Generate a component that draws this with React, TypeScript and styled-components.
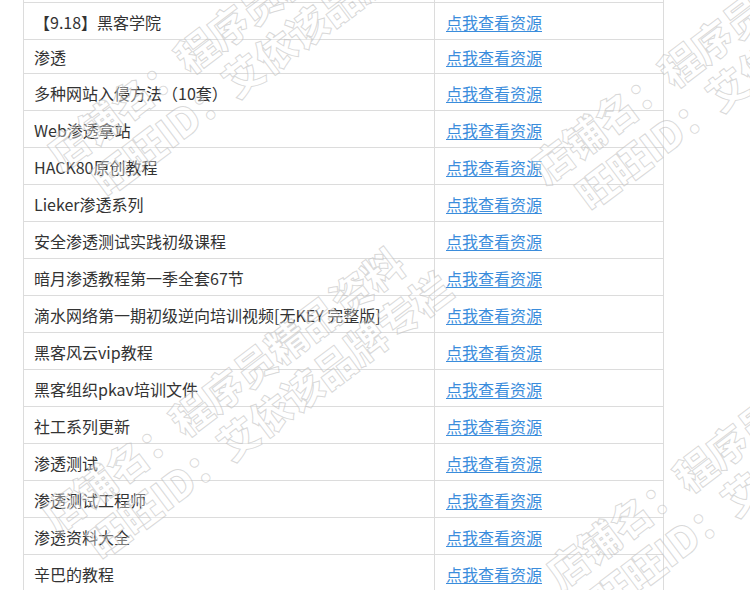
import React from "react";
import styled, { createGlobalStyle } from "styled-components";

const Global = createGlobalStyle`
  html, body { margin: 0; padding: 0; background: #fff; }
  body { font-family: "Noto Sans CJK SC", "Noto Sans", sans-serif; overflow: hidden; }
`;

const Page = styled.div`
  position: relative;
  width: 750px;
  height: 590px;
  overflow: hidden;
  background: #fff;
`;

const Table = styled.div`
  margin-left: 23px;
  width: 641px;
  box-sizing: border-box;
  border-left: 1px solid #dcdcdc;
  border-right: 1px solid #dcdcdc;
  display: flex;
  flex-direction: column;
`;

const Row = styled.div<{ $h: number }>`
  display: grid;
  grid-template-columns: 411px 1fr;
  height: ${(p) => p.$h}px;
  box-sizing: border-box;
  border-bottom: 1px solid #dcdcdc;
`;

const NameCell = styled.div`
  border-right: 1px solid #dcdcdc;
  padding: 1px 10px 0;
  display: flex;
  align-items: center;
  font-size: 16px;
  color: #333;
  white-space: nowrap;
`;

const LinkCell = styled.div`
  padding: 1px 11px 0;
  display: flex;
  align-items: center;
  font-size: 16px;
`;

const Link = styled.a`
  color: #3b8ddc;
  text-decoration: underline;
  text-underline-offset: 2px;
  cursor: pointer;
`;

const Overlay = styled.div`
  position: absolute;
  inset: 0;
  pointer-events: none;
`;

const Mark = styled.div<{ $x: number; $y: number }>`
  position: absolute;
  left: ${(p) => p.$x}px;
  top: ${(p) => p.$y}px;
  transform: rotate(-37deg);
  transform-origin: 0 0;
  white-space: nowrap;
  font-family: "Noto Sans CJK SC", sans-serif;
  font-weight: 900;
  font-size: 40px;
  line-height: 48px;
  color: rgba(255, 255, 255, 0.35);
  -webkit-text-stroke: 1px rgba(185, 185, 185, 0.55);
`;

const MarkLine = styled.div<{ $indent?: number }>`
  padding-left: ${(p) => p.$indent ?? 0}px;
`;

const rows: { name: string; h: number }[] = [
  { name: "【9.18】黑客学院", h: 37 },
  { name: "渗透", h: 34 },
  { name: "多种网站入侵方法（10套）", h: 37 },
  { name: "Web渗透拿站", h: 37 },
  { name: "HACK80原创教程", h: 37 },
  { name: "Lieker渗透系列", h: 37 },
  { name: "安全渗透测试实践初级课程", h: 37 },
  { name: "暗月渗透教程第一季全套67节", h: 37 },
  { name: "滴水网络第一期初级逆向培训视频[无KEY 完整版]", h: 37 },
  { name: "黑客风云vip教程", h: 37 },
  { name: "黑客组织pkav培训文件", h: 37 },
  { name: "社工系列更新", h: 37 },
  { name: "渗透测试", h: 37 },
  { name: "渗透测试工程师", h: 37 },
  { name: "渗透资料大全", h: 37 },
  { name: "辛巴的教程", h: 37 },
];

const marks = [
  { x: 37, y: 139 },
  { x: 32, y: 502 },
  { x: 521, y: 153 },
  { x: 536, y: 558 },
];

export default function App() {
  return (
    <Page>
      <Global />
      <Table>
        <Row $h={3}>
          <NameCell />
          <LinkCell />
        </Row>
        {rows.map((r, i) => (
          <Row key={i} $h={r.h}>
            <NameCell>{r.name}</NameCell>
            <LinkCell>
              <Link>点我查看资源</Link>
            </LinkCell>
          </Row>
        ))}
      </Table>
      <Overlay>
        {marks.map((m, i) => (
          <Mark key={i} $x={m.x} $y={m.y}>
            <MarkLine>店铺名：程序员精品资料</MarkLine>
            <MarkLine $indent={20}>旺旺ID：艾依该品牌专栏</MarkLine>
          </Mark>
        ))}
      </Overlay>
    </Page>
  );
}
